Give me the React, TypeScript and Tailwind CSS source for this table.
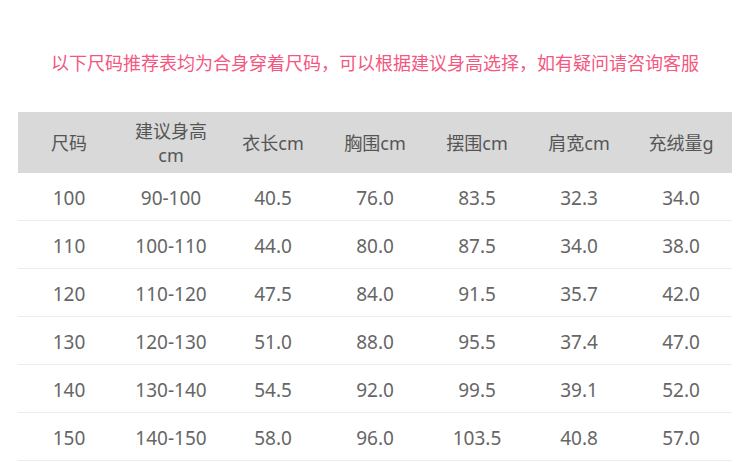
const HEAD = ['尺码', '建议身高cm', '衣长cm', '胸围cm', '摆围cm', '肩宽cm', '充绒量g'];

const ROWS = [
  ['100', '90-100', '40.5', '76.0', '83.5', '32.3', '34.0'],
  ['110', '100-110', '44.0', '80.0', '87.5', '34.0', '38.0'],
  ['120', '110-120', '47.5', '84.0', '91.5', '35.7', '42.0'],
  ['130', '120-130', '51.0', '88.0', '95.5', '37.4', '47.0'],
  ['140', '130-140', '54.5', '92.0', '99.5', '39.1', '52.0'],
  ['150', '140-150', '58.0', '96.0', '103.5', '40.8', '57.0'],
];

export default function App() {
  return (
    <div className="w-[750px] h-[462px] bg-white overflow-hidden" style={{ fontFamily: '"Noto Sans", "Noto Sans CJK SC", sans-serif' }}>
      <p className="pt-[49px] h-[112px] text-center text-[18px] leading-[28px] text-[#f4577f]">
        以下尺码推荐表均为合身穿着尺码，可以根据建议身高选择，如有疑问请咨询客服
      </p>

      <div className="mx-[18px]">
        {/* header */}
        <div className="grid grid-cols-7 h-[61px] bg-[#d9d9d9] text-[#555] text-[18px] leading-[24px]">
          {HEAD.map((h, i) => (
            <div key={i} className="flex items-center justify-center text-center px-2">
              {i === 1 ? <span>建议身高<br />cm</span> : h}
            </div>
          ))}
        </div>

        {/* rows */}
        {ROWS.map((r, i) => (
          <div key={i} className="grid grid-cols-7 h-[48px] pt-[3px] border-b border-[#ececec] text-[#666] text-[19px]">
            {r.map((c, j) => (
              <div key={j} className="flex items-center justify-center">{c}</div>
            ))}
          </div>
        ))}
      </div>
    </div>
  );
}
